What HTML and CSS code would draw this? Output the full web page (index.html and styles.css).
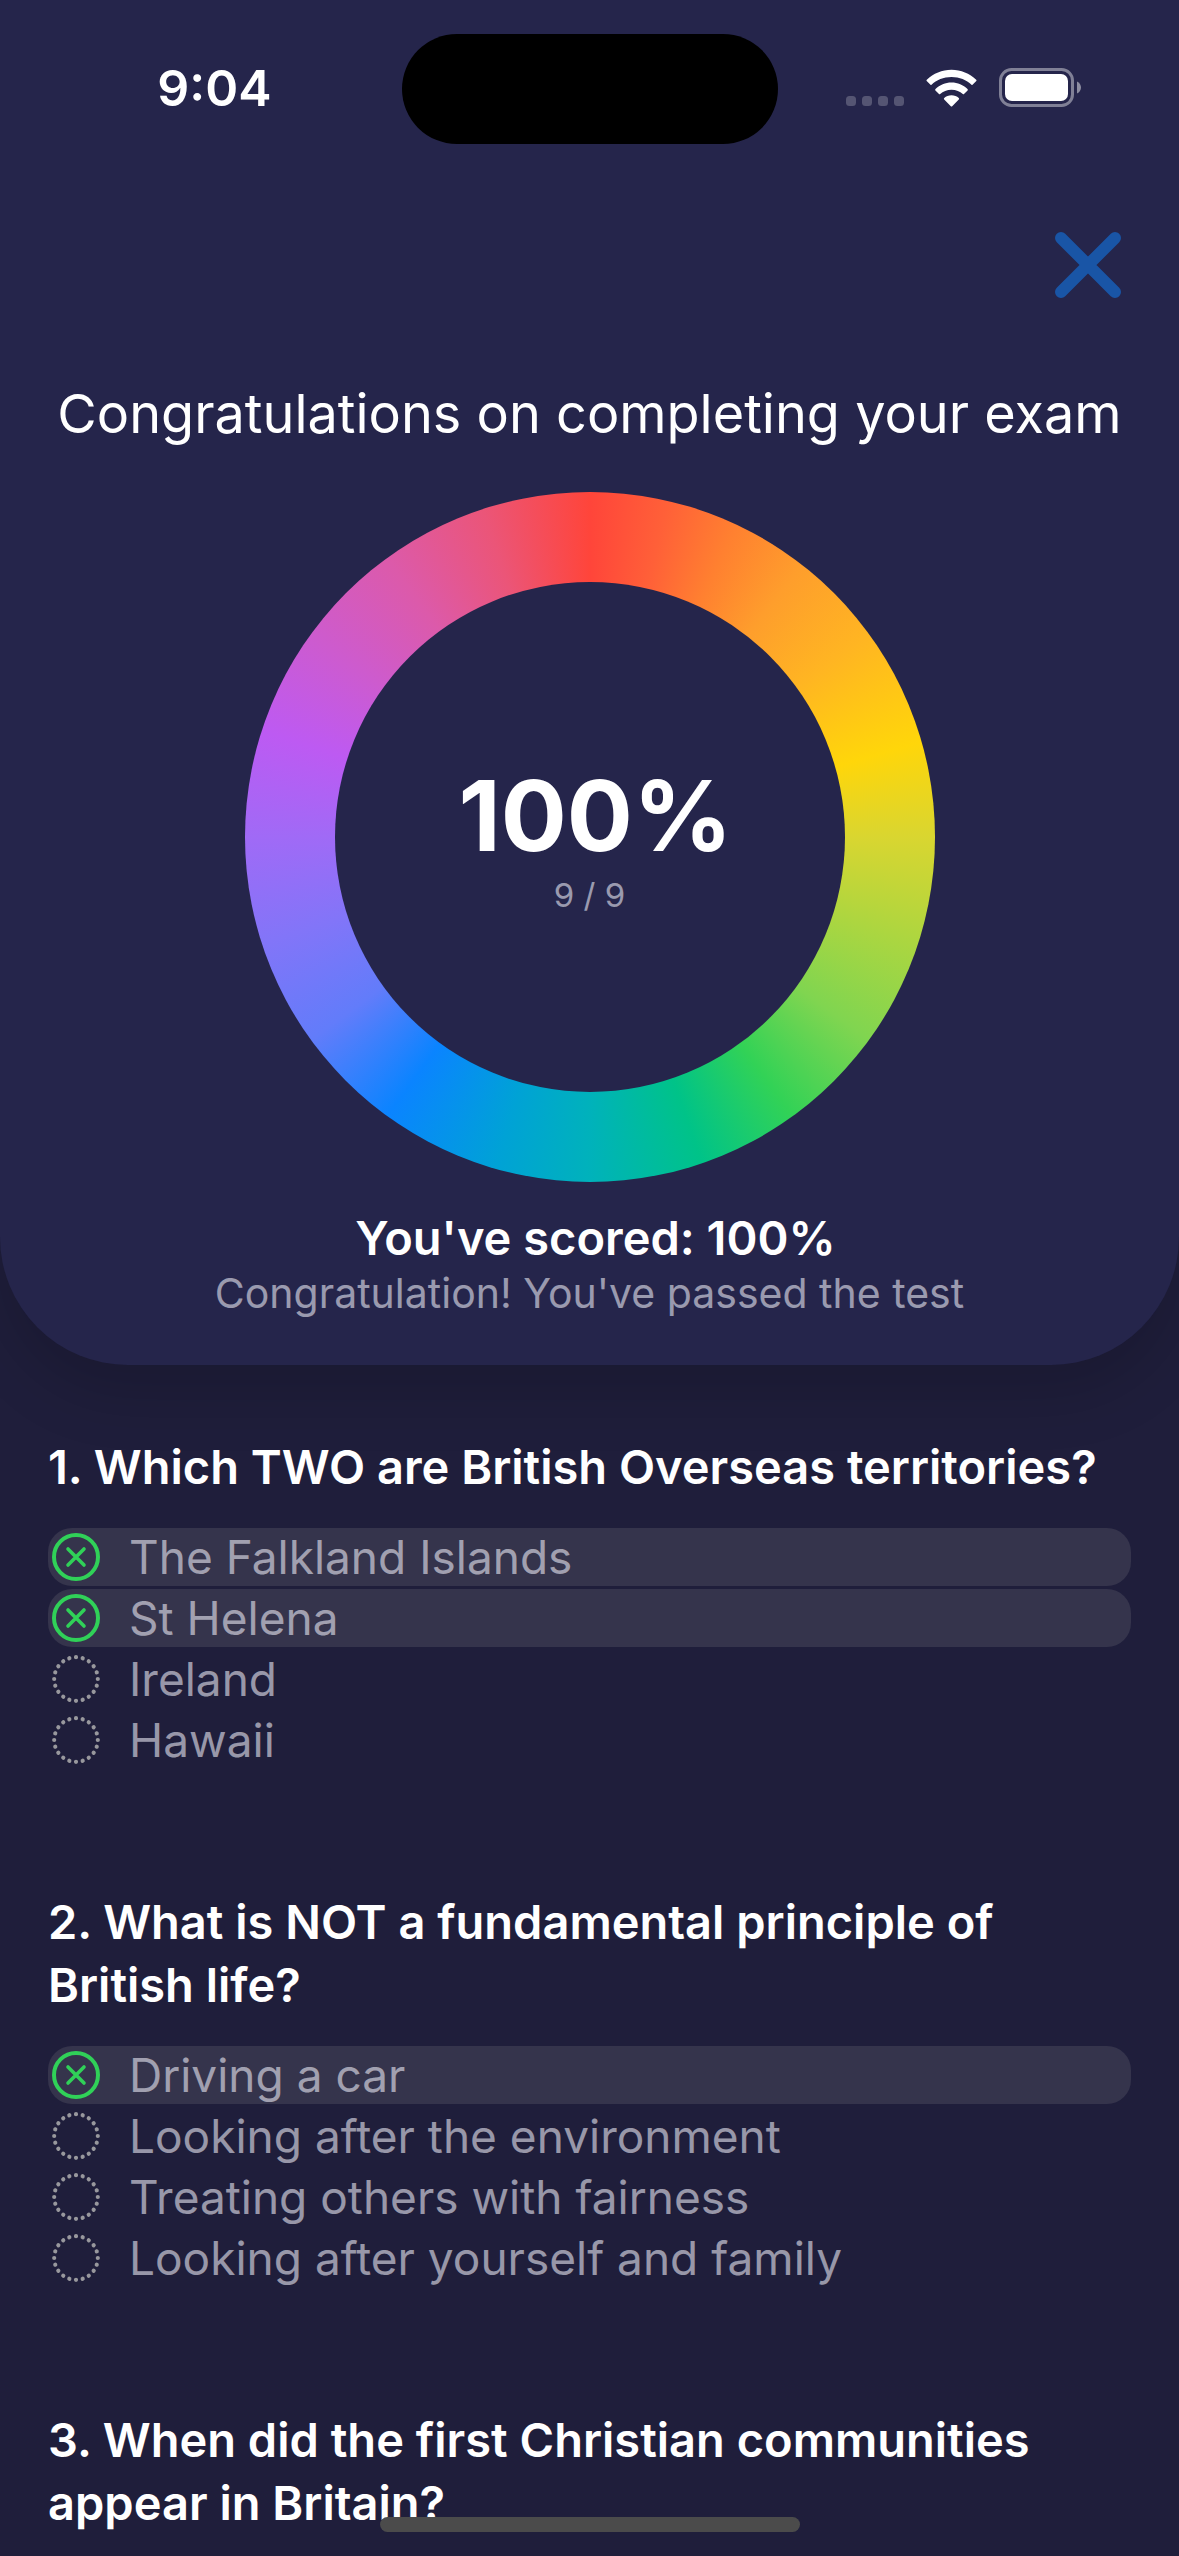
FILE: index.html
```html
<!DOCTYPE html>
<html lang="en">
<head>
<meta charset="utf-8">
<meta name="viewport" content="width=device-width, initial-scale=1">
<title>Exam result</title>
<link rel="stylesheet" href="styles.css">
</head>
<body>
<svg class="sprite" aria-hidden="true">
  <symbol id="icon-chosen" viewBox="0 0 48 48">
    <circle cx="24" cy="24" r="22" fill="none" stroke="currentColor" stroke-width="4"/>
    <path d="M16 16L32 32M32 16L16 32" fill="none" stroke="currentColor" stroke-width="3.6" stroke-linecap="round"/>
  </symbol>
  <symbol id="icon-empty" viewBox="0 0 48 48">
    <circle cx="24" cy="24" r="21.8" fill="none" stroke="currentColor" stroke-width="4.2" stroke-linecap="round" pathLength="200" stroke-dasharray="0.01 9.99"/>
  </symbol>
</svg>

<section class="summary">
  <header class="status">
    <time class="clock">9:04</time>
    <div class="island"></div>
    <div class="indicators">
      <svg class="cell" viewBox="0 0 58 10" aria-label="No signal">
        <rect x="0" width="10" height="10" rx="3.5"/>
        <rect x="16" width="10" height="10" rx="3.5"/>
        <rect x="32" width="10" height="10" rx="3.5"/>
        <rect x="48" width="10" height="10" rx="3.5"/>
      </svg>
      <svg class="wifi" viewBox="0 0 51 38" aria-label="Wi-Fi">
        <path d="M25.500 8C33.500 8 40.500 11 45.500 15.800Q46 16.300 46.500 15.800L50.300 12Q50.900 11.300 50.200 10.700C43.600 4.500 35 .800 25.500 .800S7.400 4.500 .800 10.700Q.100 11.300 .700 12L4.500 15.800Q5 16.300 5.500 15.800C10.500 11 17.500 8 25.500 8Z"/>
        <path d="M25.500 20.800C30 20.800 34 22.400 36.800 25.100Q37.400 25.600 38 25L41.600 21.400Q42.200 20.800 41.500 20.100C37.300 16.100 31.700 13.600 25.500 13.600S13.700 16.100 9.500 20.100Q8.800 20.800 9.400 21.400L13 25Q13.600 25.600 14.200 25.100C17 22.400 21 20.800 25.500 20.800Z"/>
        <path d="M25.500 26.300C28.300 26.300 30.900 27.300 32.800 29Q33.500 29.700 32.800 30.400L26.200 37.200Q25.500 37.900 24.800 37.200L18.200 30.400Q17.500 29.700 18.200 29C20.100 27.300 22.700 26.300 25.500 26.300Z"/>
      </svg>
      <svg class="battery" viewBox="0 0 82 39" aria-label="Battery full">
        <rect x="1.500" y="1.500" width="72" height="36" rx="11" fill="none" stroke="currentColor" stroke-width="3" opacity=".42"/>
        <rect x="6" y="6" width="63" height="27" rx="7"/>
        <path d="M78 13.500C80.500 14.500 82 17 82 19.500S80.500 24.500 78 25.500Z" opacity=".48"/>
      </svg>
    </div>
  </header>

  <div class="toolbar">
    <button class="close" type="button" aria-label="Close">
      <svg viewBox="0 0 66 66" aria-hidden="true">
        <path d="M6 6L60 60M60 6L6 60" fill="none" stroke="currentColor" stroke-width="12" stroke-linecap="round"/>
      </svg>
    </button>
  </div>

  <h1 class="title">Congratulations on completing your exam</h1>

  <div class="ring">
    <div class="ring-center">
      <strong class="percent">100%</strong>
      <span class="fraction">9 / 9</span>
    </div>
  </div>

  <h2 class="score">You've scored: 100%</h2>
  <p class="verdict">Congratulation! You've passed the test</p>
</section>

<main class="review">
  <section class="question">
    <h3 class="prompt">1. Which TWO are British Overseas territories?</h3>
    <ul class="answers">
      <li class="answer chosen"><svg class="mark"><use href="#icon-chosen"/></svg>The Falkland Islands</li>
      <li class="answer chosen"><svg class="mark"><use href="#icon-chosen"/></svg>St Helena</li>
      <li class="answer"><svg class="mark"><use href="#icon-empty"/></svg>Ireland</li>
      <li class="answer"><svg class="mark"><use href="#icon-empty"/></svg>Hawaii</li>
    </ul>
  </section>
  <section class="question">
    <h3 class="prompt">2. What is NOT a fundamental principle of British life?</h3>
    <ul class="answers">
      <li class="answer chosen"><svg class="mark"><use href="#icon-chosen"/></svg>Driving a car</li>
      <li class="answer"><svg class="mark"><use href="#icon-empty"/></svg>Looking after the environment</li>
      <li class="answer"><svg class="mark"><use href="#icon-empty"/></svg>Treating others with fairness</li>
      <li class="answer"><svg class="mark"><use href="#icon-empty"/></svg>Looking after yourself and family</li>
    </ul>
  </section>
  <section class="question">
    <h3 class="prompt">3. When did the first Christian communities appear in Britain?</h3>
  </section>
</main>

<div class="home-indicator"></div>
</body>
</html>
```
FILE: styles.css
```css
:root {
  --page: #1f1e3b;
  --card: #25254b;
  --text: #fff;
  --muted: rgba(235, 235, 245, 0.6);
  --green: #30d158;
  --blue: #1955a6;
}

* {
  box-sizing: border-box;
}

body {
  margin: 0;
  min-height: 100vh;
  background: var(--page);
  color: var(--text);
  font-family: Inter, "Liberation Sans", sans-serif;
  font-size: 46px;
}

h1, h2, h3, p, ul {
  margin: 0;
  padding: 0;
}

svg {
  display: block;
  fill: currentColor;
  flex: none;
}

.sprite {
  display: none;
}

/* Summary card */
.summary {
  display: flex;
  flex-direction: column;
  align-items: center;
  padding-bottom: 46px;
  background: var(--card);
  border-radius: 0 0 128px 128px;
  box-shadow: 0 30px 60px rgba(0, 0, 0, 0.16);
}

.status {
  align-self: stretch;
  display: grid;
  grid-template-columns: 1fr 376px 1fr;
  align-items: center;
  padding-top: 34px;
}

.clock {
  padding: 0 130px 2px 0;
  text-align: right;
  font-size: 50px;
  font-weight: 600;
  line-height: 60px;
}

.island {
  height: 110px;
  border-radius: 55px;
  background: #000;
}

.indicators {
  display: flex;
  align-items: flex-end;
  padding: 0 0 3px 68px;
}

.cell {
  width: 58px;
  height: 10px;
  margin-bottom: 1px;
  opacity: 0.22;
}

.wifi {
  width: 51px;
  height: 38px;
  margin: 0 22px;
}

.battery {
  width: 82px;
  height: 39px;
}

.toolbar {
  align-self: stretch;
  display: flex;
  justify-content: flex-end;
  padding: 88px 58px 0;
}

.close {
  width: 66px;
  height: 66px;
  padding: 0;
  border: 0;
  background: none;
  color: var(--blue);
}

.title {
  margin-top: 80px;
  font-size: 54px;
  font-weight: 400;
  line-height: 72px;
}

.ring {
  display: grid;
  place-items: center;
  width: 690px;
  height: 690px;
  margin-top: 42px;
  border-radius: 50%;
  background: conic-gradient(
    #ff453a 0deg, #ff6038 13deg, #ff8030 25deg, #fe9e2c 38deg, #ffb522 54deg,
    #ffd60a 74deg, #d9d630 90deg, #acd640 108deg, #80d550 126deg, #32d256 144deg,
    #00c388 161deg, #00b2bb 180deg, #00a2d6 196deg, #0a84ff 216deg,
    #627cfa 234deg, #8275f8 252deg, #a06af6 270deg, #bd5af2 288deg,
    #cd5bce 306deg, #dc5aaa 324deg, #eb5578 342deg, #ff453a 360deg
  );
}

.ring-center {
  display: flex;
  flex-direction: column;
  align-items: center;
  justify-content: center;
  width: 510px;
  height: 510px;
  border-radius: 50%;
  background: var(--card);
}

.percent {
  padding-left: 12px;
  font-size: 98px;
  font-weight: 700;
  line-height: 116px;
}

.fraction {
  color: var(--muted);
  font-size: 33px;
  line-height: 42px;
}

.score {
  margin-top: 26px;
  padding-left: 12px;
  font-size: 47px;
  font-weight: 600;
  line-height: 60px;
}

.verdict {
  color: var(--muted);
  font-size: 41px;
  line-height: 51px;
}

/* Answer review */
.review {
  display: flex;
  flex-direction: column;
  gap: 121px;
  padding: 70px 48px 0;
}

.question {
  display: flex;
  flex-direction: column;
  gap: 30px;
}

.prompt {
  font-size: 47px;
  font-weight: 600;
  line-height: 63px;
}

.answers {
  display: flex;
  flex-direction: column;
  gap: 3px;
  list-style: none;
}

.answer {
  display: flex;
  align-items: center;
  gap: 29px;
  padding-left: 4px;
  border-radius: 24px;
  color: var(--muted);
  line-height: 58px;
}

.chosen {
  background: #35344c;
}

.mark {
  width: 48px;
  height: 48px;
  color: #98989d;
}

.chosen .mark {
  color: var(--green);
}

.home-indicator {
  position: fixed;
  left: 50%;
  bottom: 24px;
  width: 420px;
  height: 15px;
  margin-left: -210px;
  border-radius: 8px;
  background: #4b4b4b;
}
```
